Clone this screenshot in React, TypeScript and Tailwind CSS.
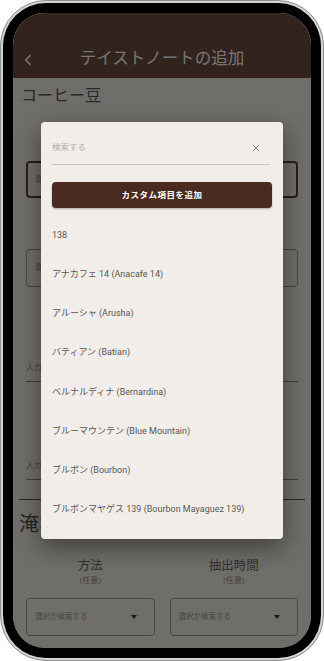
import { ChevronLeft, X } from 'lucide-react';

const beans = [
  '138',
  'アナカフェ 14 (Anacafe 14)',
  'アルーシャ (Arusha)',
  'バティアン (Batian)',
  'ベルナルディナ (Bernardina)',
  'ブルーマウンテン (Blue Mountain)',
  'ブルボン (Bourbon)',
  'ブルボンマヤゲス 139 (Bourbon Mayaguez 139)',
];

const font = { fontFamily: 'Roboto, "Noto Sans CJK JP", sans-serif' };

function Caret() {
  return (
    <svg width="6" height="4" viewBox="0 0 6 4" className="shrink-0">
      <path d="M0 0h6L3 4z" fill="#3a3a3a" />
    </svg>
  );
}

function SelectBox({ focused }: { focused?: boolean }) {
  return (
    <div
      className={
        focused
          ? 'flex h-[37px] items-center rounded-[4px] border-2 border-[#5d4037] px-[7px]'
          : 'flex h-[38px] items-center rounded-[4px] border border-[#a29c96] px-[8px]'
      }
    >
      <span className="text-[8px] text-[#9a9a9a]">選択</span>
    </div>
  );
}

function LineInput() {
  return (
    <div className="flex h-[28px] items-center border-b border-[#8a8a8a]">
      <span className="text-[8px] text-[#9a9a9a]">入力</span>
    </div>
  );
}

function Column({ label }: { label: string }) {
  return (
    <div className="flex flex-1 flex-col items-center">
      <span className="text-[12.5px] leading-[16px] text-[#6a6a6a]">{label}</span>
      <span className="mt-[1px] text-[8px] leading-[12px] text-[#8a8a8a]">(任意)</span>
      <div className="mt-[11px] flex h-[38px] w-full items-center justify-between rounded-[4px] border border-[#a29c96] px-[8px]">
        <span className="text-[7.5px] text-[#9a9a9a]">選択か検索する</span>
        <span className="mr-[9px]">
          <Caret />
        </span>
      </div>
    </div>
  );
}

export default function App() {
  return (
    <div className="h-[661px] w-[324px] bg-white" style={font}>
      <div className="h-full w-full rounded-[46px] border border-[#8d8d8d] bg-[#d4d4d4] p-[2px]">
        <div className="h-full w-full rounded-[43px] bg-black p-[10px]">
          <div className="relative flex h-full w-full flex-col overflow-hidden rounded-[32px] bg-[#f4f0e8]">
            {/* Header */}
            <div className="h-[65px] shrink-0 bg-[#6d4c41] pt-[28px]">
              <div className="relative flex h-[37px] items-center justify-center">
                <ChevronLeft
                  size={18}
                  strokeWidth={2.2}
                  className="absolute left-[6px] text-white"
                />
                <span className="text-[16.5px] text-white">テイストノートの追加</span>
              </div>
            </div>

            {/* Body */}
            <div className="flex flex-col px-[6px]">
              <div className="mt-[8px] pl-[2px] text-[16px] leading-[20px] text-[#555]">コーヒー豆</div>
              <div className="mt-[55px] px-[7px]">
                <SelectBox focused />
              </div>
              <div className="mt-[51px] px-[7px]">
                <SelectBox />
              </div>
              <div className="mt-[67px] px-[7px]">
                <LineInput />
              </div>
              <div className="mt-[70px] px-[7px]">
                <LineInput />
              </div>
              <div className="mt-[19px] h-px bg-[#5a5a5a]" />
              <div className="mt-[12px] text-[20px] leading-[24px] text-[#555]">淹れ方</div>
              <div className="mt-[22px] flex gap-[15px] px-[7px]">
                <Column label="方法" />
                <Column label="抽出時間" />
              </div>
            </div>

            {/* Dialog */}
            <div className="absolute inset-0 flex items-center justify-center bg-black/[0.54]">
              <div className="flex h-[417px] w-[242px] flex-col rounded-[4px] bg-[#f1eeea] px-[11px] shadow-[0_8px_24px_rgba(0,0,0,0.45)]">
                <div className="mr-[2px] mt-[9px] flex h-[34px] items-center justify-between border-b border-[#c9c5c1]">
                  <span className="text-[8.5px] text-[#b5afaa]">検索する</span>
                  <X size={12} strokeWidth={1.6} className="mr-[8px] text-[#6f6f6f]" />
                </div>
                <button className="mt-[17px] flex h-[26px] w-full items-center justify-center rounded-[4px] bg-[#4a2b20] text-[8.5px] font-bold tracking-[0.5px] text-white shadow-[0_1px_2px_rgba(0,0,0,0.3)]">
                  カスタム項目を追加
                </button>
                <div className="mt-[8px] flex flex-col">
                  {beans.map((b) => (
                    <div key={b} className="flex h-[39.2px] items-center text-[9px] text-[#5a5753]">
                      {b}
                    </div>
                  ))}
                </div>
              </div>
            </div>
          </div>
        </div>
      </div>
    </div>
  );
}
